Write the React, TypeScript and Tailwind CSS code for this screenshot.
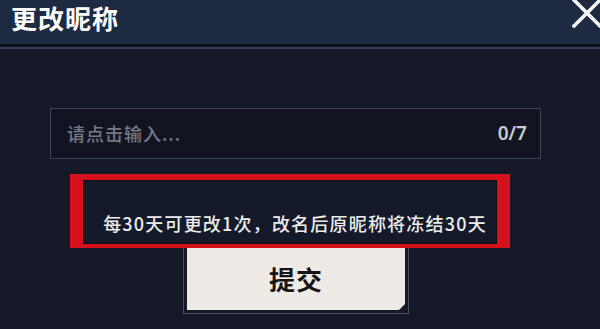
import React from "react";

export default function App() {
  return (
    <div
      className="w-[600px] h-[329px] overflow-hidden bg-[#141827] flex flex-col"
      style={{ fontFamily: '"Noto Sans CJK SC", "Noto Sans", sans-serif' }}
    >
      {/* Header */}
      <div className="h-[44px] shrink-0 bg-[#1d2a41] flex items-start justify-between">
        <div className="pl-[11px] pt-[2px] text-[26px] leading-[32px] font-bold text-white tracking-[1px]">
          更改昵称
        </div>
        <svg width="30" height="30" viewBox="0 0 30 30" className="-mt-[2px] -mr-[2px]">
          <path d="M2 2 L28 28 M28 2 L2 28" stroke="#ffffff" strokeWidth="3.5" strokeLinecap="square" />
        </svg>
      </div>
      <div className="h-[3px] shrink-0 bg-[#0c0f1c]" />
      <div className="h-[2px] shrink-0 bg-[#3a3e55]" />

      {/* Body */}
      <div className="flex flex-col pt-[59px]">
        {/* Input */}
        <div className="ml-[50px] w-[491px] h-[51px] border border-[#3e4456] bg-[#121521] flex items-center justify-between pl-[16px] pr-[13px]">
          <span className="text-[18px] font-medium text-[#747985] tracking-[1px]">请点击输入...</span>
          <span className="text-[19px] font-semibold text-[#c9cbd1]" style={{ fontFamily: '"Noto Sans", "Noto Sans CJK SC", sans-serif' }}>0/7</span>
        </div>

        {/* Red notice */}
        <div className="relative z-10 mt-[15px] ml-[70px] w-[440px] h-[74px] border-[#d5121c] border-l-[13px] border-r-[13px] border-t-[6px] border-b-[4px]">
          <div className="w-full h-full bg-[#151a2b] border border-[#0a0c14] flex items-end justify-center pb-[7px] pl-[10px]">
            <span className="text-[18px] leading-[26px] font-medium text-[#ececec] tracking-[1.2px] whitespace-nowrap">
              每30天可更改1次，改名后原昵称将冻结30天
            </span>
          </div>
        </div>

        {/* Submit button */}
        <div className="-mt-[6px] ml-[183px] w-[226px] h-[72px] border border-[#4a5064] p-[3px]">
          <div className="relative w-full h-full bg-[#eeebe7] flex items-center justify-center pt-[2px]">
            <span className="text-[26px] leading-[32px] font-bold text-[#141414] tracking-[1px]">提交</span>
            <div className="absolute right-0 bottom-0 w-0 h-0 border-l-[6px] border-l-transparent border-b-[6px] border-b-[#1a1d29]" />
          </div>
        </div>
      </div>
    </div>
  );
}
